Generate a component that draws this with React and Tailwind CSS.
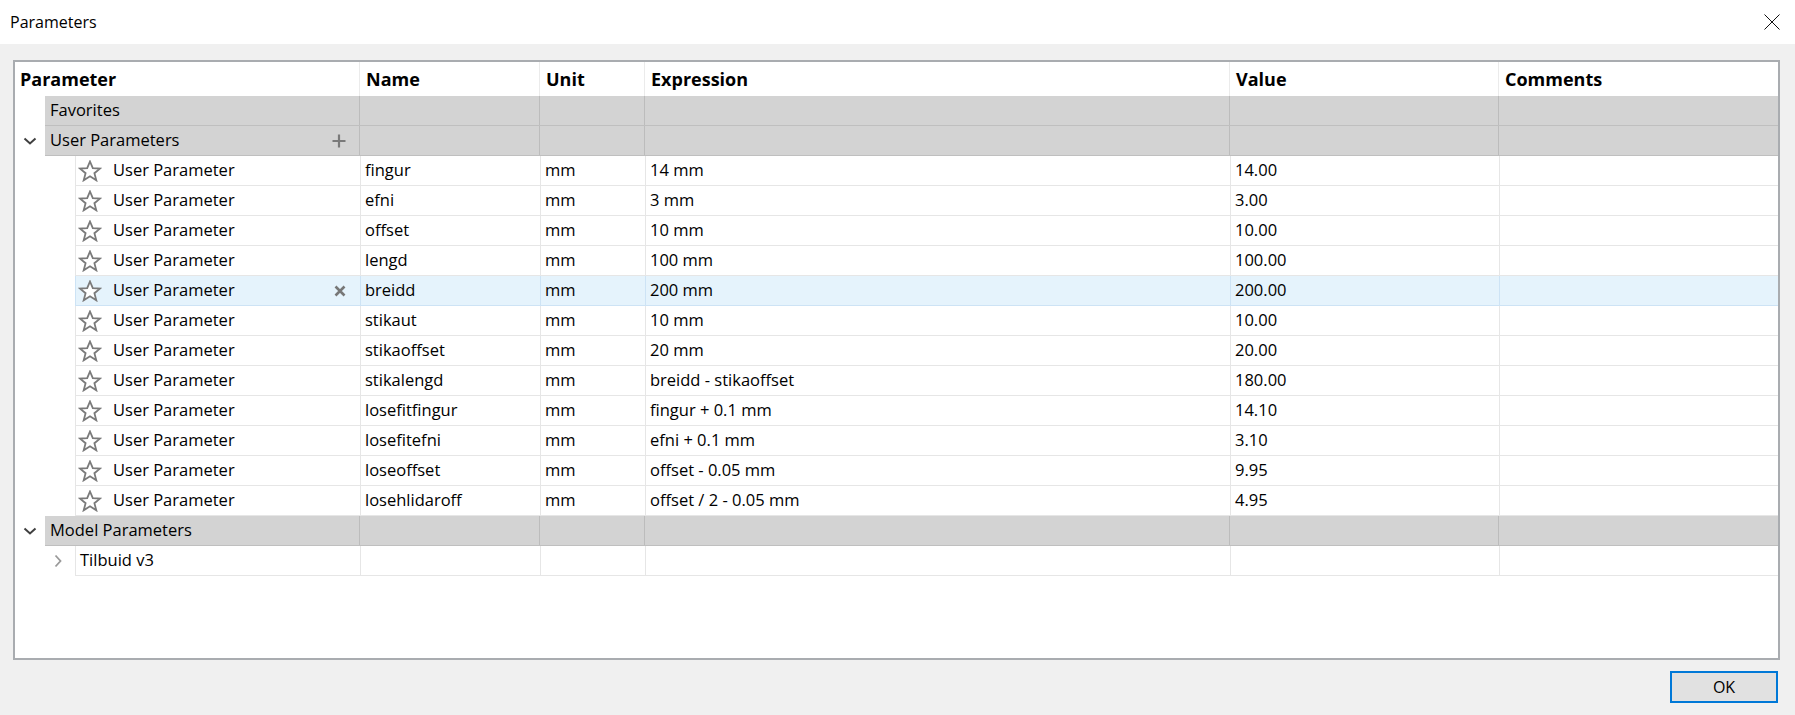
import React from 'react';

const font = { fontFamily: '"Open Sans", "Noto Sans", sans-serif' };

const headerCols = 'grid grid-cols-[345px_180px_105px_585px_269px_1fr]';
const groupCols = 'grid grid-cols-[315px_180px_105px_585px_269px_1fr]';
const dataCols = 'grid grid-cols-[285px_180px_105px_585px_269px_1fr]';

const params = [
  ['fingur', '14 mm', '14.00'],
  ['efni', '3 mm', '3.00'],
  ['offset', '10 mm', '10.00'],
  ['lengd', '100 mm', '100.00'],
  ['breidd', '200 mm', '200.00'],
  ['stikaut', '10 mm', '10.00'],
  ['stikaoffset', '20 mm', '20.00'],
  ['stikalengd', 'breidd - stikaoffset', '180.00'],
  ['losefitfingur', 'fingur + 0.1 mm', '14.10'],
  ['losefitefni', 'efni + 0.1 mm', '3.10'],
  ['loseoffset', 'offset - 0.05 mm', '9.95'],
  ['losehlidaroff', 'offset / 2 - 0.05 mm', '4.95'],
];

const StarIcon = () => (
  <svg width="24" height="22" viewBox="0 0 24 22" className="shrink-0">
    <polygon
      points="12,1.5 14.8,8.2 22,8.6 16.4,13.2 18.3,20.3 12,16.3 5.7,20.3 7.6,13.2 2,8.6 9.2,8.2"
      fill="white"
      stroke="#7a7a7a"
      strokeWidth="1.8"
      strokeLinejoin="miter"
    />
  </svg>
);

const ChevronDown = () => (
  <svg width="14" height="10" viewBox="0 0 14 10">
    <path d="M1.5 2.5 L7 7.5 L12.5 2.5" fill="none" stroke="#404040" strokeWidth="2" />
  </svg>
);

const ChevronRight = () => (
  <svg width="10" height="14" viewBox="0 0 10 14">
    <path d="M2.5 1.5 L7.5 7 L2.5 12.5" fill="none" stroke="#9a9a9a" strokeWidth="1.8" />
  </svg>
);

const PlusIcon = () => (
  <svg width="14" height="14" viewBox="0 0 14 14">
    <path d="M7 0.5 V13.5 M0.5 7 H13.5" stroke="#7a7a7a" strokeWidth="2.2" />
  </svg>
);

const CrossIcon = () => (
  <svg width="12" height="12" viewBox="0 0 12 12">
    <path d="M1.5 1.5 L10.5 10.5 M10.5 1.5 L1.5 10.5" stroke="#777" strokeWidth="2.6" />
  </svg>
);

const GroupRow = ({ label, chevron, action }) => (
  <div className="flex h-[30px]">
    <div className="w-[30px] flex items-center justify-center bg-white">
      {chevron && <ChevronDown />}
    </div>
    <div className={`${groupCols} flex-1 bg-[#d3d3d3] border-b border-[#bfbfbf]`}>
      <div className="flex items-center justify-between pl-[5px] pr-[13px] border-r border-[#bcbcbc]">
        <span>{label}</span>
        {action && <PlusIcon />}
      </div>
      <div className="border-r border-[#bcbcbc]" />
      <div className="border-r border-[#bcbcbc]" />
      <div className="border-r border-[#bcbcbc]" />
      <div className="border-r border-[#bcbcbc]" />
      <div />
    </div>
  </div>
);

const ParamRow = ({ name, expr, value, selected }) => {
  const line = selected ? 'border-[#cde3f5]' : 'border-[#e6e6e6]';
  return (
    <div className="flex h-[30px]">
      <div className="w-[60px] bg-white" />
      <div
        className={`${dataCols} flex-1 border-b border-l ${line} ${selected ? 'bg-[#e5f3fc]' : 'bg-white'}`}
      >
        <div className={`flex items-center pl-[2px] pr-[14px] border-r ${line}`}>
          <StarIcon />
          <span className="ml-[11px] flex-1">User Parameter</span>
          {selected && <CrossIcon />}
        </div>
        <div className={`flex items-center pl-[4px] border-r ${line}`}>{name}</div>
        <div className={`flex items-center pl-[4px] border-r ${line}`}>mm</div>
        <div className={`flex items-center pl-[4px] border-r ${line}`}>{expr}</div>
        <div className={`flex items-center pl-[4px] border-r ${line}`}>{value}</div>
        <div />
      </div>
    </div>
  );
};

const App = () => {
  const headers = ['Parameter', 'Name', 'Unit', 'Expression', 'Value', 'Comments'];

  return (
    <div className="w-[1795px] h-[715px] bg-[#f0f0f0] flex flex-col text-black text-[16.5px]" style={font}>
      {/* title bar */}
      <div className="h-[44px] bg-white flex items-center justify-between pl-[10px] pr-[15px]">
        <span className="text-[16px]">Parameters</span>
        <svg width="16" height="16" viewBox="0 0 16 16">
          <path d="M0.5 0.5 L15.5 15.5 M15.5 0.5 L0.5 15.5" stroke="#111" strokeWidth="1" />
        </svg>
      </div>

      {/* table */}
      <div className="pt-[16px] pl-[13px]">
        <div className="w-[1767px] h-[600px] bg-white border-2 border-[#a9acb0] flex flex-col">
          <div className={`${headerCols} h-[34px] shrink-0`}>
            {headers.map((h, i) => (
              <div
                key={h}
                className={`flex items-center font-bold text-[18px] ${i === 0 ? 'pl-[5px]' : 'pl-[6px]'} ${i < 5 ? 'border-r border-[#ebebeb]' : ''}`}
              >
                {h}
              </div>
            ))}
          </div>

          <GroupRow label="Favorites" />
          <GroupRow label="User Parameters" chevron action />
          {params.map(([name, expr, value]) => (
            <ParamRow key={name} name={name} expr={expr} value={value} selected={name === 'breidd'} />
          ))}
          <GroupRow label="Model Parameters" chevron />

          <div className="flex h-[30px]">
            <div className="w-[60px] flex items-center justify-end pr-[12px]">
              <ChevronRight />
            </div>
            <div className={`${dataCols} flex-1 border-b border-l border-[#e6e6e6]`}>
              <div className="flex items-center pl-[4px] border-r border-[#e6e6e6]">Tilbuid v3</div>
              <div className="border-r border-[#e6e6e6]" />
              <div className="border-r border-[#e6e6e6]" />
              <div className="border-r border-[#e6e6e6]" />
              <div className="border-r border-[#e6e6e6]" />
              <div />
            </div>
          </div>
        </div>
      </div>

      {/* footer */}
      <div className="flex justify-end pr-[17px] pt-[11px]">
        <button className="w-[108px] h-[32px] bg-[#e1e1e1] border-2 border-[#0078d7] text-[16px]">
          OK
        </button>
      </div>
    </div>
  );
};

export default App;
